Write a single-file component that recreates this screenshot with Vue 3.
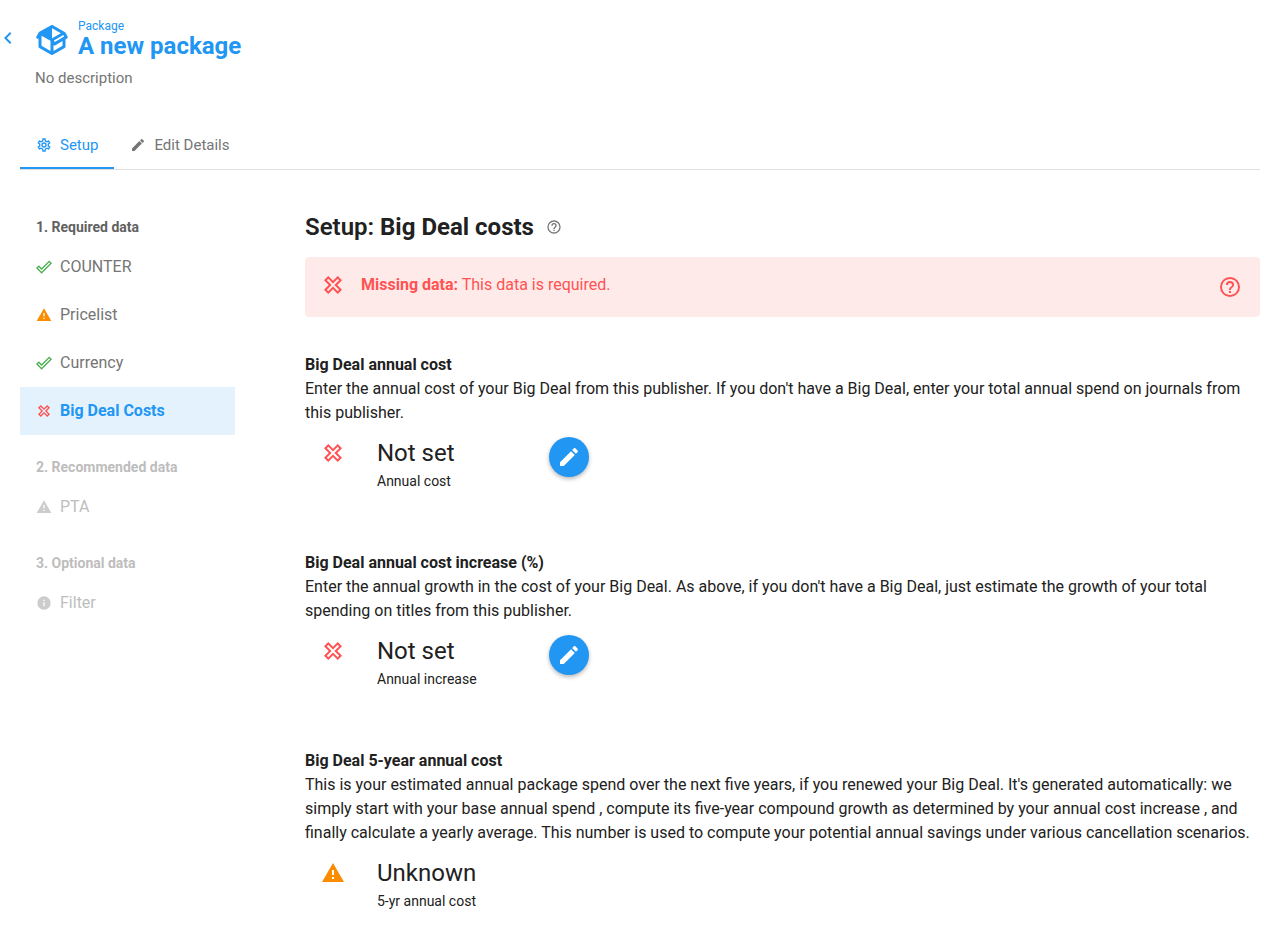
<script setup>
const icons = {
  back: 'M15.41,16.58L10.83,12L15.41,7.41L14,6L8,12L14,18L15.41,16.58Z',
  package:
    'M2,10.96C1.5,10.68 1.35,10.07 1.63,9.59L3.13,7C3.24,6.8 3.41,6.66 3.6,6.58L11.43,2.18C11.59,2.06 11.79,2 12,2C12.21,2 12.41,2.06 12.57,2.18L20.47,6.62C20.66,6.72 20.82,6.88 20.91,7.08L22.36,9.6C22.64,10.08 22.47,10.69 22,10.96L21,11.54V16.5C21,16.88 20.79,17.21 20.47,17.38L12.57,21.82C12.41,21.94 12.21,22 12,22C11.79,22 11.59,21.94 11.43,21.82L3.53,17.38C3.21,17.21 3,16.88 3,16.5V10.96C2.7,11.13 2.32,11.14 2,10.96M12,4.15V10.85L17.96,7.5L12,4.15M5,15.91L11,19.29V12.58L5,9.21V15.91M19,15.91V12.69L14,15.59C13.67,15.77 13.3,15.76 13,15.6V19.29L19,15.91M13.85,13.36L20.13,9.73L19.55,8.72L13.27,12.35L13.85,13.36Z',
  cog: 'M12,8A4,4 0 0,1 16,12A4,4 0 0,1 12,16A4,4 0 0,1 8,12A4,4 0 0,1 12,8M12,10A2,2 0 0,0 10,12A2,2 0 0,0 12,14A2,2 0 0,0 14,12A2,2 0 0,0 12,10M10,22C9.75,22 9.54,21.82 9.5,21.58L9.13,18.93C8.5,18.68 7.96,18.34 7.44,17.94L4.95,18.95C4.73,19.03 4.46,18.95 4.34,18.73L2.34,15.27C2.21,15.05 2.27,14.78 2.46,14.63L4.57,12.97L4.5,12L4.57,11L2.46,9.37C2.27,9.22 2.21,8.95 2.34,8.73L4.34,5.27C4.46,5.05 4.73,4.96 4.95,5.05L7.44,6.05C7.96,5.66 8.5,5.32 9.13,5.07L9.5,2.42C9.54,2.18 9.75,2 10,2H14C14.25,2 14.46,2.18 14.5,2.42L14.87,5.07C15.5,5.32 16.04,5.66 16.56,6.05L19.05,5.05C19.27,4.96 19.54,5.05 19.66,5.27L21.66,8.73C21.79,8.95 21.73,9.22 21.54,9.37L19.43,11L19.5,12L19.43,13L21.54,14.63C21.73,14.78 21.79,15.05 21.66,15.27L19.66,18.73C19.54,18.95 19.27,19.04 19.05,18.95L16.56,17.95C16.04,18.34 15.5,18.68 14.87,18.93L14.5,21.58C14.46,21.82 14.25,22 14,22H10M11.25,4L10.88,6.61C9.68,6.86 8.62,7.5 7.85,8.39L5.44,7.35L4.69,8.65L6.8,10.2C6.4,11.37 6.4,12.64 6.8,13.8L4.68,15.36L5.43,16.66L7.86,15.62C8.63,16.5 9.68,17.14 10.87,17.38L11.24,20H12.76L13.13,17.39C14.32,17.14 15.37,16.5 16.14,15.62L18.57,16.66L19.32,15.36L17.2,13.81C17.6,12.64 17.6,11.37 17.2,10.2L19.31,8.65L18.56,7.35L16.15,8.39C15.38,7.5 14.32,6.86 13.12,6.62L12.75,4H11.25Z',
  pencil:
    'M20.71,7.04C21.1,6.65 21.1,6 20.71,5.63L18.37,3.29C18,2.9 17.35,2.9 16.96,3.29L15.12,5.12L18.87,8.87M3,17.25V21H6.75L17.81,9.93L14.06,6.18L3,17.25Z',
  check:
    'M19.78,2.2L24,6.42L8.44,22L0,13.55L4.22,9.33L8.44,13.55L19.78,2.2M19.78,5L8.44,16.36L4.22,12.19L2.81,13.55L8.44,19.17L21.19,6.42L19.78,5Z',
  alert: 'M13,14H11V9H13M13,18H11V16H13M1,21H23L12,2L1,21Z',
  cross:
    'M3,16.74L7.76,12L3,7.26L7.26,3L12,7.76L16.74,3L21,7.26L16.24,12L21,16.74L16.74,21L12,16.24L7.26,21L3,16.74M12,13.41L16.74,18.16L18.16,16.74L13.41,12L18.16,7.26L16.74,5.84L12,10.59L7.26,5.84L5.84,7.26L10.59,12L5.84,16.74L7.26,18.16L12,13.41Z',
  info: 'M13,9H11V7H13M13,17H11V11H13M12,2A10,10 0 0,0 2,12A10,10 0 0,0 12,22A10,10 0 0,0 22,12A10,10 0 0,0 12,2Z',
  help: 'M11,18H13V16H11V18M12,2A10,10 0 0,0 2,12A10,10 0 0,0 12,22A10,10 0 0,0 22,12A10,10 0 0,0 12,2M12,20C7.59,20 4,16.41 4,12C4,7.59 7.59,4 12,4C16.41,4 20,7.59 20,12C20,16.41 16.41,20 12,20M12,6A4,4 0 0,0 8,10H10A2,2 0 0,1 12,8A2,2 0 0,1 14,10C14,12 11,11.75 11,15H13C13,12.75 16,12.5 16,10A4,4 0 0,0 12,6Z',
}

const groups = [
  {
    title: '1. Required data',
    items: [
      { label: 'COUNTER', icon: 'check', tone: 'success' },
      { label: 'Pricelist', icon: 'alert', tone: 'warning' },
      { label: 'Currency', icon: 'check', tone: 'success' },
      { label: 'Big Deal Costs', icon: 'cross', tone: 'error', active: true },
    ],
  },
  { title: '2. Recommended data', muted: true, items: [{ label: 'PTA', icon: 'alert' }] },
  { title: '3. Optional data', muted: true, items: [{ label: 'Filter', icon: 'info' }] },
]

const sections = [
  {
    title: 'Big Deal annual cost',
    text: "Enter the annual cost of your Big Deal from this publisher. If you don't have a Big Deal, enter your total annual spend on journals from this publisher.",
    icon: 'cross',
    tone: 'error',
    value: 'Not set',
    caption: 'Annual cost',
    editable: true,
  },
  {
    title: 'Big Deal annual cost increase (%)',
    text: "Enter the annual growth in the cost of your Big Deal. As above, if you don't have a Big Deal, just estimate the growth of your total spending on titles from this publisher.",
    icon: 'cross',
    tone: 'error',
    value: 'Not set',
    caption: 'Annual increase',
    editable: true,
  },
  {
    title: 'Big Deal 5-year annual cost',
    text: "This is your estimated annual package spend over the next five years, if you renewed your Big Deal. It's generated automatically: we simply start with your base annual spend , compute its five-year compound growth as determined by your annual cost increase , and finally calculate a yearly average. This number is used to compute your potential annual savings under various cancellation scenarios.",
    icon: 'alert',
    tone: 'warning',
    value: 'Unknown',
    caption: '5-yr annual cost',
  },
]
</script>

<template>
  <div class="page">
    <header class="header">
      <button class="back" type="button" aria-label="Back">
        <svg class="icon icon-m" viewBox="0 0 24 24"><path :d="icons.back" /></svg>
      </button>
      <div class="intro">
        <div class="brand">
          <svg class="icon icon-xl" viewBox="0 0 24 24"><path :d="icons.package" /></svg>
          <div>
            <div class="kind">Package</div>
            <h1 class="name">A new package</h1>
          </div>
        </div>
        <p class="description">No description</p>
      </div>
    </header>

    <nav class="tabs" aria-label="Package views">
      <button class="tab tab-active" type="button">
        <svg class="icon icon-s" viewBox="0 0 24 24"><path :d="icons.cog" /></svg>
        Setup
      </button>
      <button class="tab" type="button">
        <svg class="icon icon-s" viewBox="0 0 24 24"><path :d="icons.pencil" /></svg>
        Edit Details
      </button>
    </nav>

    <div class="body">
      <nav class="side" aria-label="Setup steps">
        <section v-for="g in groups" :key="g.title" class="group" :class="{ muted: g.muted }">
          <h2 class="group-title">{{ g.title }}</h2>
          <a
            v-for="i in g.items"
            :key="i.label"
            href="#"
            class="item"
            :class="{ active: i.active }"
          >
            <svg class="icon icon-s" :class="i.tone" viewBox="0 0 24 24"><path :d="icons[i.icon]" /></svg>
            {{ i.label }}
          </a>
        </section>
      </nav>

      <main class="main">
        <div class="heading">
          <h2 class="heading-text">Setup: <b>Big Deal costs</b></h2>
          <button class="heading-help" type="button" aria-label="About Big Deal costs">
            <svg class="icon icon-s" viewBox="0 0 24 24"><path :d="icons.help" /></svg>
          </button>
        </div>

        <div class="notice" role="alert">
          <svg class="icon icon-m" viewBox="0 0 24 24"><path :d="icons.cross" /></svg>
          <p class="notice-text"><b>Missing data:</b> This data is required.</p>
          <button class="notice-help" type="button" aria-label="Help">
            <svg class="icon icon-m" viewBox="0 0 24 24"><path :d="icons.help" /></svg>
          </button>
        </div>

        <section v-for="s in sections" :key="s.title" class="section">
          <h3 class="section-title">{{ s.title }}</h3>
          <p class="section-text">{{ s.text }}</p>
          <div class="row">
            <svg class="icon icon-m row-icon" :class="s.tone" viewBox="0 0 24 24"><path :d="icons[s.icon]" /></svg>
            <div class="figure">
              <div class="value">{{ s.value }}</div>
              <div class="caption">{{ s.caption }}</div>
            </div>
            <button v-if="s.editable" class="fab" type="button" :aria-label="'Edit ' + s.caption">
              <svg class="icon icon-m" viewBox="0 0 24 24"><path :d="icons.pencil" /></svg>
            </button>
          </div>
        </section>
      </main>
    </div>
  </div>
</template>

<style>
body {
  margin: 0;
  background: #fff;
}
</style>

<style scoped>
.page {
  font-family: Roboto, 'Liberation Sans', sans-serif;
  font-size: 16px;
  line-height: 24px;
  color: #212121;
  padding-top: 18px;
}
h1, h2, h3, p {
  margin: 0;
}
button {
  font: inherit;
  color: inherit;
  background: none;
  border: 0;
  padding: 0;
  cursor: pointer;
}
.icon {
  display: block;
  flex: none;
  fill: currentColor;
}
.icon-s { width: 16px; height: 16px; }
.icon-m { width: 24px; height: 24px; }
.icon-xl { width: 36px; height: 36px; }
.success { color: #4caf50; }
.warning { color: #fb8c00; }
.error { color: #ff5252; }

.header {
  display: flex;
  align-items: flex-start;
  gap: 14px;
  margin-left: -4px;
}
.back {
  color: #2196f3;
  padding-top: 8px;
}
.brand {
  display: flex;
  align-items: flex-end;
  gap: 8px;
  color: #2196f3;
}
.kind {
  font-size: 12px;
  line-height: 16px;
}
.name {
  font-size: 24px;
  line-height: 24px;
  font-weight: 700;
}
.description {
  font-size: 15px;
  line-height: 24px;
  padding: 8px 0 0 1px;
  color: #757575;
}

.tabs {
  display: flex;
  margin: 31px 14px 0 20px;
  border-bottom: 1px solid #e0e0e0;
  color: #757575;
}
.tab {
  display: flex;
  align-items: center;
  gap: 8px;
  height: 48px;
  padding: 2px 16px 0;
  font-size: 15px;
  border-bottom: 2px solid transparent;
}
.tab-active {
  color: #2196f3;
  border-color: #2196f3;
}

.body {
  display: grid;
  grid-template-columns: 215px minmax(0, 1fr);
  gap: 70px;
  padding: 41px 14px 16px 20px;
}
.side {
  padding-top: 8px;
}
.group + .group {
  padding-top: 24px;
}
.group-title {
  font-size: 14px;
  line-height: 16px;
  font-weight: 700;
  padding: 0 16px 8px;
  color: #616161;
}
.item {
  display: flex;
  align-items: center;
  gap: 8px;
  height: 48px;
  padding: 0 16px;
  color: #757575;
  text-decoration: none;
}
.active {
  background: #e3f2fd;
  color: #2196f3;
  font-weight: 700;
}
.muted .group-title,
.muted .item {
  color: #bdbdbd;
}
.muted .icon {
  color: #cccccc;
}

.heading {
  display: flex;
  align-items: center;
  gap: 12px;
}
.heading-text {
  font-size: 24px;
  line-height: 32px;
  font-weight: 600;
}
.heading-text b {
  font-weight: 700;
}
.heading-help {
  color: #757575;
}
.notice {
  display: flex;
  align-items: flex-start;
  gap: 16px;
  margin-top: 14px;
  padding: 16px;
  border-radius: 4px;
  background: #ffeaea;
  color: #ff5252;
}
.notice-text {
  flex: 1;
}
.notice-help {
  padding: 2px;
}
.section {
  padding: 36px 0 22px;
}
.section-title {
  font-size: 16px;
  line-height: 24px;
  font-weight: 700;
}
.row {
  display: flex;
  align-items: flex-start;
  padding-top: 12px;
}
.row-icon {
  margin: 4px 32px 0 16px;
}
.figure {
  width: 172px;
}
.value {
  font-size: 24px;
  line-height: 32px;
}
.caption {
  font-size: 14px;
  line-height: 24px;
}
.fab {
  display: flex;
  align-items: center;
  justify-content: center;
  width: 40px;
  height: 40px;
  border-radius: 50%;
  background: #2196f3;
  color: #fff;
  box-shadow: 0 2px 4px rgba(0, 0, 0, 0.28);
}
</style>
